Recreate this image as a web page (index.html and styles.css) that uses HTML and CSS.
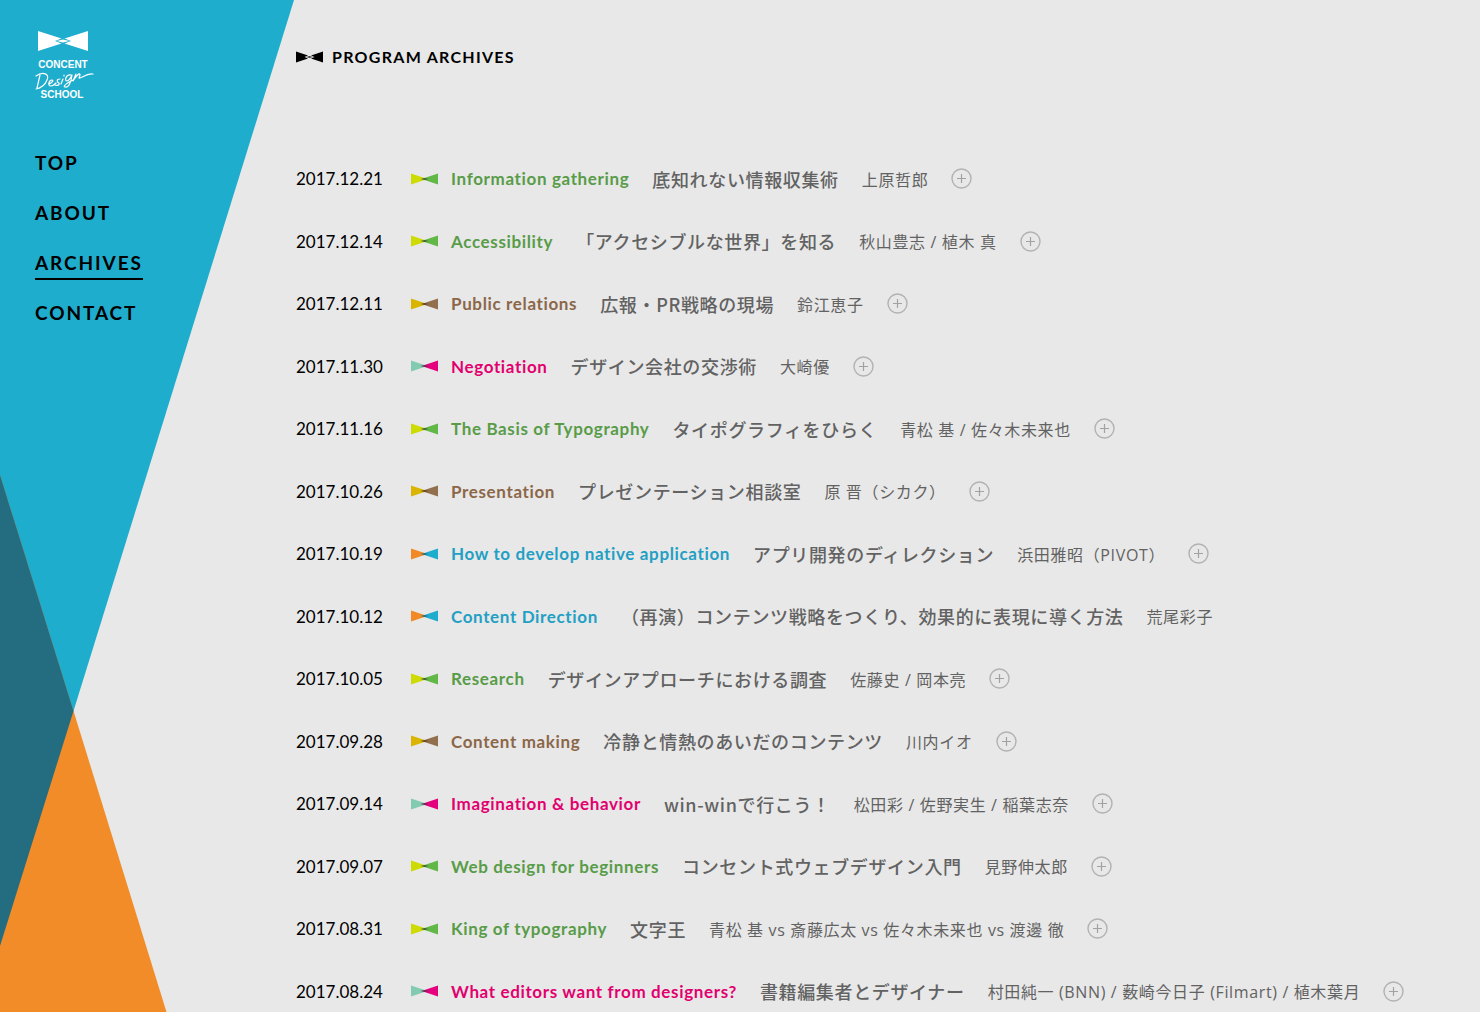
FILE: index.html
```html
<!DOCTYPE html>
<html lang="ja">
<head>
<meta charset="utf-8">
<meta name="viewport" content="width=device-width, initial-scale=1">
<title>Program Archives | Concent Design School</title>
<link rel="stylesheet" href="styles.css">
</head>
<body>
<svg class="backdrop" viewBox="0 0 300 1012" aria-hidden="true">
  <path fill="#1eadcd" d="M0 0H294L73.500 711L0 946Z"/>
  <path fill="#f18c29" d="M0 475L73.500 711L166.500 1012H0Z"/>
  <path fill="#246c80" d="M0 475L73.500 711L0 946Z"/>
</svg>
<svg class="defs" aria-hidden="true">
  <symbol id="bow" viewBox="0 0 27 12"><path class="left" d="M0 0.500L13.500 5V7L0 11.500Z"/><path class="right" d="M27 0.500L13.500 5V7L27 11.500Z"/><path class="knot" d="M9.500 6L13.500 5L17.500 6L13.500 7Z"/></symbol>
  <symbol id="bow-solid" viewBox="0 0 27 12"><path d="M0 0.500L12 4.500L8.500 6L12 7.500L0 11.500Z M27 0.500L15 4.500L18.500 6L15 7.500L27 11.500Z M10 6L13.500 5.300L17 6L13.500 6.700Z"/></symbol>
  <symbol id="plus" viewBox="0 0 21 21"><circle cx="10.500" cy="10.500" r="9.500" fill="none" stroke="#b2b2b2" stroke-width="1.400"/><path d="M6 10.500H15M10.500 6V15" stroke="#a2a2a2" stroke-width="1.200"/></symbol>
</svg>
<div class="layout">
  <header class="side">
    <a class="logo" href="#" aria-label="Concent Design School">
      <svg viewBox="0 0 60 70" width="60" height="70">
        <path fill="#fff" d="M3 1L26.500 8.500L20 11L26.500 13.500L3 21Z M53 1L29.500 8.500L36 11L29.500 13.500L53 21Z M21.500 11L28 9.500L34.500 11L28 12.500Z"/>
        <text x="28" y="38" class="logo-text" text-anchor="middle">CONCENT</text>
        <path fill="none" stroke="#fff" stroke-width="1.200" stroke-linecap="round" stroke-linejoin="round" d="M5 45L2 58M1 46C8 41 15 44 12 50C10 55 6 58 1 59M14 54C17 53 19 50 17 50C14 50 12 56 16 56C18 56 20 54 21 53M25 49C21 49 22 52 24 53C25 55 22 56 20 55M28 49L26 54M29 46V45M36 45C31 44 29 51 32 51C34 51 36 47 37 45C36 52 34 58 30 57C27 56 34 52 38 50M41 44L38 51C41 46 45 42 45 45L44 48C46 49 51 43 58 44"/>
        <text x="27" y="68" class="logo-text" text-anchor="middle">SCHOOL</text>
      </svg>
    </a>
    <nav class="nav">
      <a href="#">TOP</a>
      <a href="#">ABOUT</a>
      <a class="current" href="#" aria-current="page">ARCHIVES</a>
      <a href="#">CONTACT</a>
    </nav>
  </header>
  <main class="main">
    <h1 class="heading"><svg class="bow"><use href="#bow-solid"/></svg>PROGRAM ARCHIVES</h1>
    <ul class="list">
      <li class="green"><time>2017.12.21</time><svg class="bow"><use href="#bow"/></svg><span class="category">Information gathering</span><a class="title" href="#">底知れない情報収集術</a><span class="author">上原哲郎</span><button class="more" aria-label="詳細"><svg><use href="#plus"/></svg></button></li>
      <li class="green"><time>2017.12.14</time><svg class="bow"><use href="#bow"/></svg><span class="category">Accessibility</span><a class="title" href="#">「アクセシブルな世界」を知る</a><span class="author">秋山豊志 / 植木 真</span><button class="more" aria-label="詳細"><svg><use href="#plus"/></svg></button></li>
      <li class="brown"><time>2017.12.11</time><svg class="bow"><use href="#bow"/></svg><span class="category">Public relations</span><a class="title" href="#">広報・PR戦略の現場</a><span class="author">鈴江恵子</span><button class="more" aria-label="詳細"><svg><use href="#plus"/></svg></button></li>
      <li class="pink"><time>2017.11.30</time><svg class="bow"><use href="#bow"/></svg><span class="category">Negotiation</span><a class="title" href="#">デザイン会社の交渉術</a><span class="author">大崎優</span><button class="more" aria-label="詳細"><svg><use href="#plus"/></svg></button></li>
      <li class="green"><time>2017.11.16</time><svg class="bow"><use href="#bow"/></svg><span class="category">The Basis of Typography</span><a class="title" href="#">タイポグラフィをひらく</a><span class="author">青松 基 / 佐々木未来也</span><button class="more" aria-label="詳細"><svg><use href="#plus"/></svg></button></li>
      <li class="brown"><time>2017.10.26</time><svg class="bow"><use href="#bow"/></svg><span class="category">Presentation</span><a class="title" href="#">プレゼンテーション相談室</a><span class="author">原 晋（シカク）</span><button class="more" aria-label="詳細"><svg><use href="#plus"/></svg></button></li>
      <li class="blue"><time>2017.10.19</time><svg class="bow"><use href="#bow"/></svg><span class="category">How to develop native application</span><a class="title" href="#">アプリ開発のディレクション</a><span class="author">浜田雅昭（PIVOT）</span><button class="more" aria-label="詳細"><svg><use href="#plus"/></svg></button></li>
      <li class="blue"><time>2017.10.12</time><svg class="bow"><use href="#bow"/></svg><span class="category">Content Direction</span><a class="title" href="#">（再演）コンテンツ戦略をつくり、効果的に表現に導く方法</a><span class="author">荒尾彩子</span></li>
      <li class="green"><time>2017.10.05</time><svg class="bow"><use href="#bow"/></svg><span class="category">Research</span><a class="title" href="#">デザインアプローチにおける調査</a><span class="author">佐藤史 / 岡本亮</span><button class="more" aria-label="詳細"><svg><use href="#plus"/></svg></button></li>
      <li class="brown"><time>2017.09.28</time><svg class="bow"><use href="#bow"/></svg><span class="category">Content making</span><a class="title" href="#">冷静と情熱のあいだのコンテンツ</a><span class="author">川内イオ</span><button class="more" aria-label="詳細"><svg><use href="#plus"/></svg></button></li>
      <li class="pink"><time>2017.09.14</time><svg class="bow"><use href="#bow"/></svg><span class="category">Imagination &amp; behavior</span><a class="title" href="#">win-winで行こう！</a><span class="author">松田彩 / 佐野実生 / 稲葉志奈</span><button class="more" aria-label="詳細"><svg><use href="#plus"/></svg></button></li>
      <li class="green"><time>2017.09.07</time><svg class="bow"><use href="#bow"/></svg><span class="category">Web design for beginners</span><a class="title" href="#">コンセント式ウェブデザイン入門</a><span class="author">見野伸太郎</span><button class="more" aria-label="詳細"><svg><use href="#plus"/></svg></button></li>
      <li class="green"><time>2017.08.31</time><svg class="bow"><use href="#bow"/></svg><span class="category">King of typography</span><a class="title" href="#">文字王</a><span class="author">青松 基 vs 斎藤広太 vs 佐々木未来也 vs 渡邊 徹</span><button class="more" aria-label="詳細"><svg><use href="#plus"/></svg></button></li>
      <li class="pink"><time>2017.08.24</time><svg class="bow"><use href="#bow"/></svg><span class="category">What editors want from designers?</span><a class="title" href="#">書籍編集者とデザイナー</a><span class="author">村田純一 (BNN) / 薮崎今日子 (Filmart) / 植木葉月</span><button class="more" aria-label="詳細"><svg><use href="#plus"/></svg></button></li>
    </ul>
  </main>
</div>
</body>
</html>
```
FILE: styles.css
```css
* { box-sizing: border-box; }
html { background: #e8e8e8; }
body {
  margin: 0;
  overflow-x: hidden;
  color: #000;
  font-family: Lato, "Noto Sans CJK JP", sans-serif;
  font-size: 16px;
  letter-spacing: 0.04em;
}
html { scrollbar-width: none; }
a { color: inherit; text-decoration: none; }
.backdrop {
  position: absolute;
  top: 0;
  left: 0;
  z-index: -1;
  width: 300px;
}
.defs { position: absolute; width: 0; height: 0; }
.layout { display: flex; }
.side { flex: 0 0 296px; padding: 30px 0 0 35px; }
.logo { display: block; width: 60px; height: 70px; }
.logo svg { display: block; }
.logo-text {
  fill: #fff;
  font: bold 10px "Liberation Sans", sans-serif;
  letter-spacing: 0;
}
.nav {
  display: flex;
  flex-direction: column;
  align-items: flex-start;
  gap: 18px;
  margin-top: 48px;
  font-size: 19px;
  font-weight: 700;
  line-height: 30px;
  letter-spacing: 0.1em;
}
.nav a { border-bottom: 2px solid transparent; }
.nav .current { border-color: #000; }
.main { flex: 1; min-width: 0; }
.heading {
  display: flex;
  align-items: center;
  gap: 9px;
  margin: 45px 0 78px;
  font-size: 16px;
  font-weight: 700;
  line-height: 24px;
  letter-spacing: 0.08em;
}
.bow { flex: none; width: 27px; height: 12px; }
.list { margin: 0; padding: 0; list-style: none; }
.list li {
  display: flex;
  align-items: center;
  height: 62px;
  white-space: nowrap;
}
.list li:nth-child(odd) { height: 63px; }
.list time { width: 115px; font-size: 17px; letter-spacing: 0; }
.category { margin-left: 13px; font-size: 17px; font-weight: 700; }
.title {
  margin-left: 23px;
  color: #626262;
  font-family: "Noto Sans CJK JP", sans-serif;
  font-size: 18px;
  font-weight: 500;
}
.author {
  margin-left: 23px;
  color: #626262;
  font-family: "Open Sans", "Noto Sans CJK JP", sans-serif;
}
.more {
  flex: none;
  width: 21px;
  height: 21px;
  margin-left: 23px;
  padding: 0;
  border: 0;
  background: none;
}
.more svg { display: block; width: 21px; height: 21px; }
.left { fill: var(--left); }
.right { fill: var(--right); }
.knot { fill: var(--knot); }
.green { --left: #cddb00; --right: #62b846; --knot: #3d5c38; }
.brown { --left: #dab500; --right: #92704e; --knot: #5c4523; }
.pink { --left: #83cbb0; --right: #e5007e; --knot: #652b50; }
.blue { --left: #f18a25; --right: #1eadcd; --knot: #246c80; }
.green .category { color: #589c48; }
.brown .category { color: #8b6748; }
.pink .category { color: #e2006f; }
.blue .category { color: #239fc4; }
```
